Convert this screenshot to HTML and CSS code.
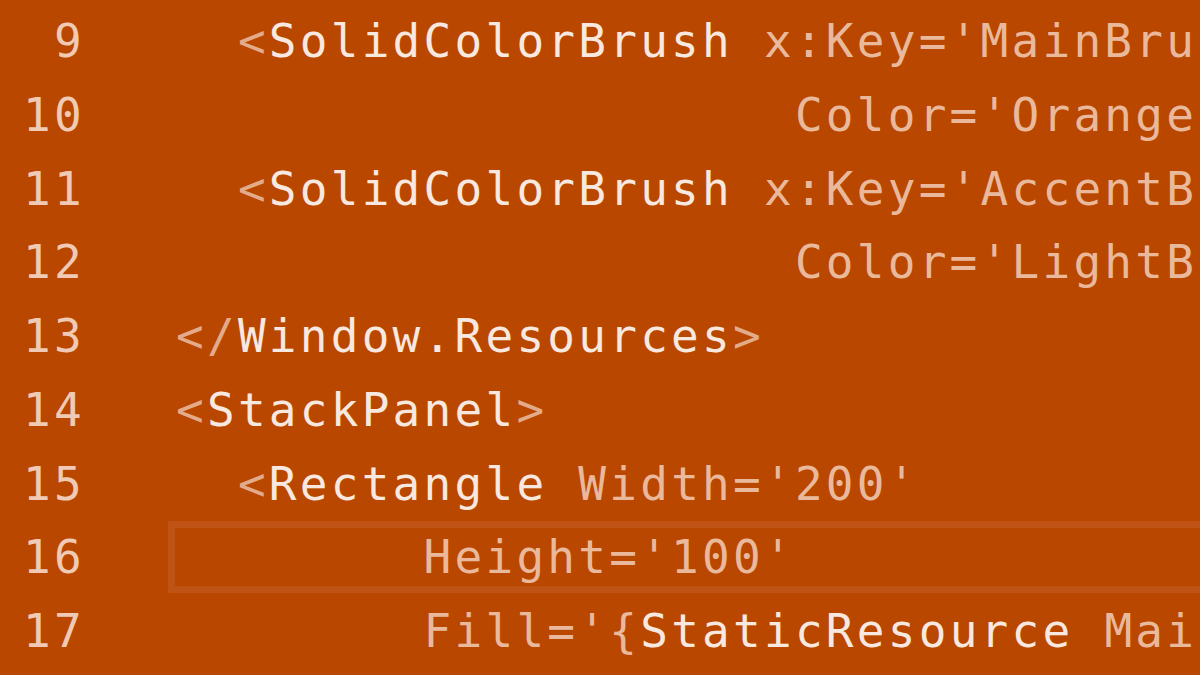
FILE: index.html
```html
<!DOCTYPE html>
<html lang="en">
<head>
<meta charset="utf-8">
<title>XAML code</title>
<link rel="stylesheet" href="styles.css">
</head>
<body>
<main class="editor">
  <div class="line"><span class="num">9</span><span class="code">  <span class="p">&lt;</span><span class="t">SolidColorBrush</span> <span class="a">x:Key='MainBrush'</span></span></div>
  <div class="line"><span class="num">10</span><span class="code">                    <span class="a">Color='Orange'</span><span class="p">/&gt;</span></span></div>
  <div class="line"><span class="num">11</span><span class="code">  <span class="p">&lt;</span><span class="t">SolidColorBrush</span> <span class="a">x:Key='AccentBrush'</span></span></div>
  <div class="line"><span class="num">12</span><span class="code">                    <span class="a">Color='LightBlue'</span><span class="p">/&gt;</span></span></div>
  <div class="line"><span class="num">13</span><span class="code"><span class="p">&lt;/</span><span class="t">Window.Resources</span><span class="p">&gt;</span></span></div>
  <div class="line"><span class="num">14</span><span class="code"><span class="p">&lt;</span><span class="t">StackPanel</span><span class="p">&gt;</span></span></div>
  <div class="line"><span class="num">15</span><span class="code">  <span class="p">&lt;</span><span class="t">Rectangle</span> <span class="a">Width='200'</span></span></div>
  <div class="line current"><span class="num">16</span><span class="code">        <span class="a">Height='100'</span></span></div>
  <div class="line"><span class="num">17</span><span class="code">        <span class="a">Fill='{</span><span class="t">StaticResource</span> <span class="a">MainBrush}'</span><span class="p">/&gt;</span></span></div>
</main>
</body>
</html>
```
FILE: styles.css
```css
html, body {
  margin: 0;
  padding: 0;
  background: #b94700;
  overflow: hidden;
  width: 1200px;
  height: 675px;
}

.editor {
  width: 1500px;
  padding-top: 5px;
  font-family: "DejaVu Sans Mono", "Liberation Mono", monospace;
  font-size: 46px;
  letter-spacing: 3.25px;
  line-height: 73.75px;
}

.line {
  display: flex;
  height: 73.75px;
}

.num {
  width: 62px;
  margin-left: 23px;
  text-align: right;
  color: #f0cab4;
  flex: none;
}

.code {
  flex: 1;
  margin-left: 91px;
  white-space: pre;
  color: #f7e7de;
}

.current .code {
  margin-left: 83px;
  padding-left: 8px;
  height: 72px;
  box-sizing: border-box;
  box-shadow: inset 0 0 0 7px #bf5215;
}

.p { color: #e4ab8b; }
.t { color: #f8e8df; }
.a { color: #eab99c; }
```
